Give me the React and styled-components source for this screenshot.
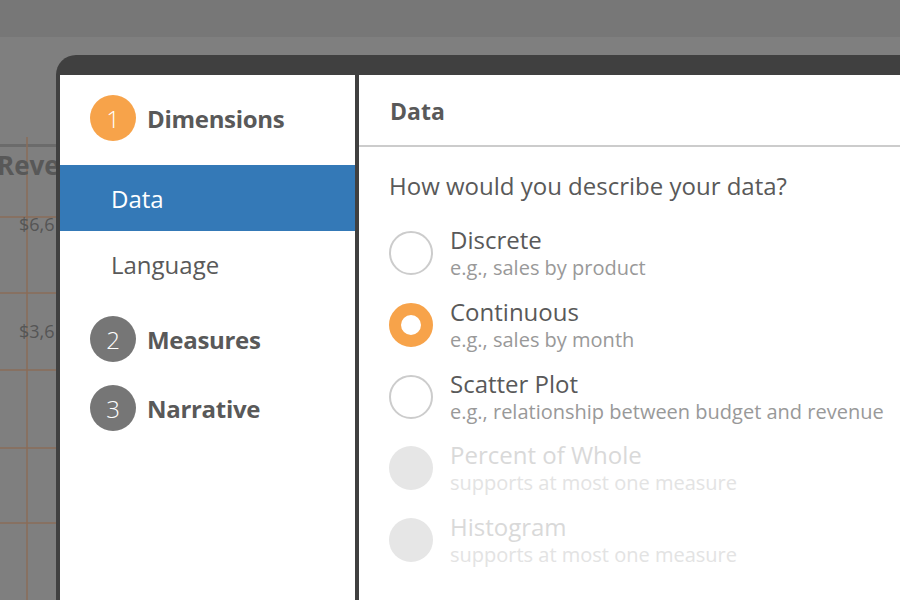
import React from 'react';
import styled, { createGlobalStyle } from 'styled-components';

const GlobalStyle = createGlobalStyle`
  html, body {
    margin: 0;
    padding: 0;
    width: 900px;
    height: 600px;
    overflow: hidden;
    font-family: "Open Sans", "Liberation Sans", sans-serif;
  }
`;

const Page = styled.div`
  position: relative;
  width: 900px;
  height: 600px;
  overflow: hidden;
  background-color: #7f7f7f;
  display: flex;
  flex-direction: column;
`;

const TopBar = styled.div`
  height: 37px;
  background-color: #777777;
`;

const Sheet = styled.div`
  flex: 1;
  position: relative;
`;

const ChartSvg = styled.svg`
  display: block;
`;

const Modal = styled.div`
  position: absolute;
  left: 56px;
  top: 55px;
  width: 900px;
  height: 600px;
  background-color: #404040;
  border-top-left-radius: 20px;
  padding: 20px 0 0 4px;
  box-sizing: border-box;
  display: flex;
  gap: 4px;
`;

const LeftPanel = styled.nav`
  width: 295px;
  background-color: #ffffff;
  display: flex;
  flex-direction: column;
  padding-top: 20px;
`;

const StepRow = styled.div`
  display: flex;
  align-items: center;
  gap: 11px;
  padding-left: 30px;
  margin-top: ${p => p.$top}px;
  margin-bottom: ${p => p.$bottom || 0}px;
`;

const StepBadge = styled.span`
  width: 46px;
  height: 46px;
  border-radius: 50%;
  background-color: ${p => (p.$active ? '#f7a34a' : '#767676')};
  color: #ffffff;
  display: flex;
  align-items: center;
  justify-content: center;
  font-size: 24px;
  font-weight: 300;
`;

const StepLabel = styled.span`
  font-size: 24px;
  font-weight: 700;
  color: #595959;
  letter-spacing: -0.3px;
`;

const NavItem = styled.div`
  height: 66px;
  display: flex;
  align-items: center;
  padding-left: 51px;
  font-size: 24px;
  color: ${p => (p.$active ? '#ffffff' : '#595959')};
  background-color: ${p => (p.$active ? '#3479b7' : 'transparent')};
`;

const RightPanel = styled.section`
  flex: 1;
  background-color: #ffffff;
  display: flex;
  flex-direction: column;
`;

const PanelHeader = styled.div`
  height: 72px;
  border-bottom: 2px solid #cccccc;
  display: flex;
  align-items: center;
  padding-left: 31px;
  padding-top: 2px;
  box-sizing: border-box;
  font-size: 23px;
  font-weight: 700;
  color: #595959;
`;

const PanelBody = styled.div`
  padding: 24px 0 0 30px;
  display: flex;
  flex-direction: column;
`;

const Question = styled.div`
  font-size: 24px;
  line-height: 30px;
  color: #595959;
  margin-bottom: 24px;
`;

const OptionList = styled.div`
  display: flex;
  flex-direction: column;
  gap: 15.75px;
`;

const Option = styled.label`
  display: flex;
  align-items: center;
  gap: 17px;
`;

const Radio = styled.span`
  width: 44px;
  height: 44px;
  border-radius: 50%;
  box-sizing: border-box;
  flex-shrink: 0;
  background-color: ${p => (p.$disabled ? '#e6e6e6' : '#ffffff')};
  border: ${p =>
    p.$checked ? '12px solid #f7a34a' : p.$disabled ? 'none' : '2px solid #cccccc'};
`;

const OptionText = styled.span`
  display: flex;
  flex-direction: column;
`;

const OptionTitle = styled.span`
  font-size: 24px;
  line-height: 30px;
  color: ${p => (p.$disabled ? '#d9d9d9' : '#595959')};
`;

const OptionHint = styled.span`
  font-size: 20px;
  line-height: 26px;
  color: ${p => (p.$disabled ? '#e3e3e3' : '#999999')};
`;

const options = [
  { title: 'Discrete', hint: 'e.g., sales by product' },
  { title: 'Continuous', hint: 'e.g., sales by month', checked: true },
  { title: 'Scatter Plot', hint: 'e.g., relationship between budget and revenue' },
  { title: 'Percent of Whole', hint: 'supports at most one measure', disabled: true },
  { title: 'Histogram', hint: 'supports at most one measure', disabled: true },
];

const BackgroundChart = () => (
  <ChartSvg width="900" height="563" viewBox="0 37 900 563">
    <line x1="0" y1="145.5" x2="900" y2="145.5" stroke="#6b6b6b" strokeWidth="3" />
    <line x1="27" y1="137" x2="27" y2="600" stroke="#8a6d58" strokeWidth="1.5" />
    {[217, 293, 370, 448, 523].map(y => (
      <line key={y} x1="0" y1={y} x2="900" y2={y} stroke="#8a6d58" strokeWidth="1.5" />
    ))}
    <text x="-3" y="175" fontFamily="Open Sans, sans-serif" fontWeight="700" fontSize="26" fill="#585858">
      Reve
    </text>
    <text x="19" y="231" fontFamily="Open Sans, sans-serif" fontSize="18" fill="#555555">
      $6,6
    </text>
    <text x="19" y="338" fontFamily="Open Sans, sans-serif" fontSize="18" fill="#555555">
      $3,6
    </text>
  </ChartSvg>
);

const App = () => (
  <>
    <GlobalStyle />
    <Page>
      <TopBar />
      <Sheet>
        <BackgroundChart />
      </Sheet>
      <Modal>
        <LeftPanel>
          <StepRow $top={0} $bottom={24}>
            <StepBadge $active>1</StepBadge>
            <StepLabel>Dimensions</StepLabel>
          </StepRow>
          <NavItem $active>Data</NavItem>
          <NavItem>Language</NavItem>
          <StepRow $top={19}>
            <StepBadge>2</StepBadge>
            <StepLabel>Measures</StepLabel>
          </StepRow>
          <StepRow $top={23}>
            <StepBadge>3</StepBadge>
            <StepLabel>Narrative</StepLabel>
          </StepRow>
        </LeftPanel>
        <RightPanel>
          <PanelHeader>Data</PanelHeader>
          <PanelBody>
            <Question>How would you describe your data?</Question>
            <OptionList>
              {options.map(o => (
                <Option key={o.title}>
                  <Radio $checked={o.checked} $disabled={o.disabled} />
                  <OptionText>
                    <OptionTitle $disabled={o.disabled}>{o.title}</OptionTitle>
                    <OptionHint $disabled={o.disabled}>{o.hint}</OptionHint>
                  </OptionText>
                </Option>
              ))}
            </OptionList>
          </PanelBody>
        </RightPanel>
      </Modal>
    </Page>
  </>
);

export default App;
